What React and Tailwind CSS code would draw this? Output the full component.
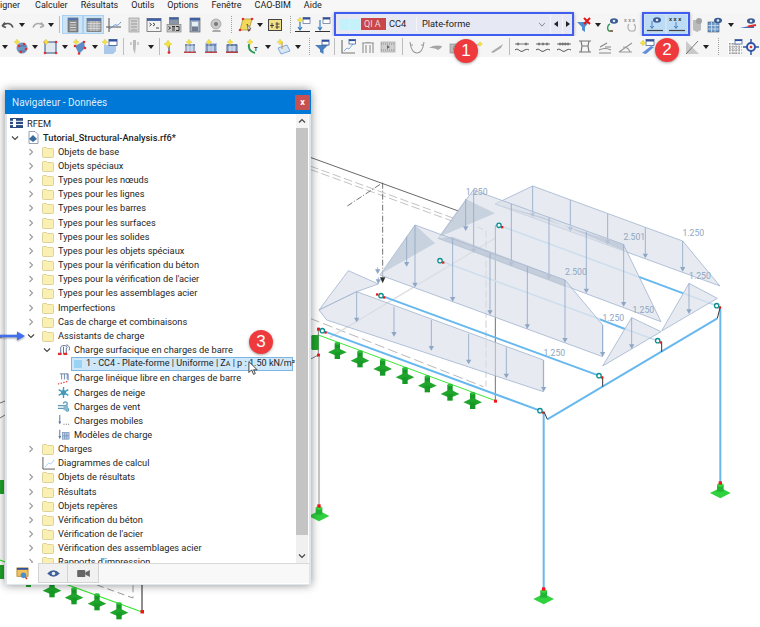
import React from "react";

const Star = ({ x = 3, y = 3, s = 3 }) => {
  const X = Number(x), Y = Number(y), S = Number(s);
  return (
    <polygon fill="#f5e23a" stroke="#c9b21e" strokeWidth=".3" points={`${X},${Y - S} ${X + S * 0.35},${Y - S * 0.35} ${X + S},${Y} ${X + S * 0.35},${Y + S * 0.35} ${X},${Y + S} ${X - S * 0.35},${Y + S * 0.35} ${X - S},${Y} ${X - S * 0.35},${Y - S * 0.35}`} />
  );
};
const Eye = ({ x = 10, y = 4 }) => (
  <g>
    <ellipse cx={x} cy={y} rx="4" ry="2.8" fill="#3a5a94" />
    <circle cx={x} cy={y} r="1.3" fill="#dfe8f5" />
  </g>
);
const Tag = ({ x = 8, y = 1 }) => (
  <g>
    <rect x={x} y={y} width="7" height="6" fill="#fff" stroke="#6b7c99" strokeWidth=".8" />
    <rect x={x} y={y} width="7" height="2" fill="#2f4f9e" />
  </g>
);
const Dots = ({ pts }) => pts.map((p, i) => <circle key={i} cx={p[0]} cy={p[1]} r="1.3" fill="#e03030" />);
const Bars = () => (
  <g>
    <rect x="2" y="12.5" width="12" height="1.4" fill="#b83030" />
    <path d="M4 5v8M8 5v8M12 5v8M3 6h10" stroke="#4f6d9e" strokeWidth="1" fill="none" />
    <rect x="5" y="7" width="6" height="5" fill="#bcd0e8" opacity=".8" />
  </g>
);
const Wavy = ({ d = 2 }) => (
  <g fill="none" stroke="#777" strokeWidth="1">
    <path d="M1 5h14" />
    {Array.from({ length: d }).map((_, i) => <circle key={i} cx={4 + i * (8 / Math.max(d - 1, 1))} cy="5" r="1" fill="#777" />)}
    <path d="M1 11c3-3 5 3 8 1s4-2 6-1" stroke="#555" />
  </g>
);

const icons = {
  undo: <path d="M2 9l3-3.5M2 9l4 1.5M3 8.5c3-3 8-3 10 2" fill="none" stroke="#555" strokeWidth="1.6" />,
  redo: <path d="M14 9l-3-3.5M14 9l-4 1.5M13 8.5c-3-3-8-3-10 2" fill="none" stroke="#aaa" strokeWidth="1.6" />,
  navA: <g><rect x="3" y="1" width="10" height="14" fill="#8b8b8b" stroke="#5a5a5a" strokeWidth=".6" /><rect x="3" y="1" width="10" height="2.4" fill="#5474ac" /><path d="M5 5.5h6M5 8h6M5 10.5h6M5 13h6" stroke="#d6d6d6" strokeWidth="1" /></g>,
  navB: <g><rect x="1" y="1.5" width="14" height="13" fill="#a5a5a5" stroke="#5a5a5a" strokeWidth=".6" /><rect x="1" y="1.5" width="14" height="2.4" fill="#5474ac" /><path d="M1.5 6.5h13M1.5 9h13M1.5 11.5h13M5 4v10M8 4v10M11 4v10" stroke="#dcdcdc" strokeWidth=".8" /></g>,
  chart: <g fill="none"><path d="M3 1v14M0 10h15" stroke="#555" strokeWidth="1" /><path d="M3 12c3-1 5-5 7-4s3-1 5-3" stroke="#5a8fd0" strokeWidth="1" /></g>,
  doc: <g><rect x="3" y="1" width="10" height="14" fill="#d4d4d4" stroke="#999" strokeWidth=".7" /><path d="M5 4h6M5 7h6M5 10h6M5 13h6" stroke="#999" strokeWidth="1" /></g>,
  win: <g><rect x="1" y="1.5" width="14" height="13" fill="#f3f3f3" stroke="#666" strokeWidth=".8" /><rect x="1" y="1.5" width="14" height="2.4" fill="#3f5fa6" /><path d="M3.5 6l2 1.5-2 1.5M7 6l2 1.5-2 1.5M10 11h3" fill="none" stroke="#333" strokeWidth=".9" /></g>,
  sc: <g><rect x="3.5" y="0.5" width="9" height="7" fill="#8896a8" stroke="#666" strokeWidth=".6" /><rect x="3.5" y="0.5" width="9" height="2" fill="#3f5fa6" /><rect x="1" y="7.5" width="14" height="7.5" fill="#c8c8c8" stroke="#777" strokeWidth=".6" /><path d="M2.5 9.5l2 1.5-2 1.5M6 9.5h3M6 11h3M6 13h3M10 9.5h3v4h-3" fill="none" stroke="#222" strokeWidth=".9" /></g>,
  docb: <g><rect x="3" y="1" width="10" height="14" fill="#9fb0c6" stroke="#666" strokeWidth=".7" /><rect x="3" y="1" width="10" height="2.4" fill="#3f5fa6" /><rect x="5" y="5" width="6" height="4" fill="#e9eef5" /><path d="M5 11h6M5 13h6" stroke="#445" strokeWidth="1" /></g>,
  eye3d: <g><circle cx="8" cy="7" r="5" fill="#c9c9c9" stroke="#999" strokeWidth=".7" /><circle cx="8" cy="7" r="2" fill="#777" /><path d="M5 13h7l1 2H4z" fill="#aaa" /></g>,
  para: <g><polygon points="5,2 14,2 11,13 2,13" fill="#f1d95c" stroke="#a78d24" strokeWidth=".7" /><Dots pts={[[5, 2], [14, 2], [11, 13], [2, 13]]} /><path d="M9 7l4 5-2 .3-.5 2z" fill="#eee" stroke="#333" strokeWidth=".6" /></g>,
  box: <g><rect x="1.5" y="2.5" width="13" height="11" fill="#f3e187" stroke="#444" strokeWidth="1" /><path d="M5 6v5M3 8.5h4M10 5v7M8.5 7h4M8.5 10h4" stroke="#333" strokeWidth=".9" /></g>,
  up: <g><Tag x={8} y={0.5} /><Star x={5} y={3} /><path d="M5 5v7M3 10l2 3 2-3" stroke="#3a7fbf" strokeWidth="1.2" fill="none" /><path d="M0 14.5h15" stroke="#333" strokeWidth="1" /></g>,
  dn: <g><Tag x={8} y={0.5} /><path d="M5 3v9M3 10l2 3 2-3" stroke="#3a7fbf" strokeWidth="1.2" fill="none" /><path d="M0 14.5h15" stroke="#333" strokeWidth="1" /></g>,
  fx: <g><polygon points="1,5 13,5 9,10 9,15 6,13 6,10" fill="#4f8fd0" /><path d="M8 1l6 6M14 1L8 7" stroke="#e01818" strokeWidth="2" /></g>,
  eyeC: <g><Eye x={10} y={4} /><path d="M6 7c-3 1-3 6-1 7h4" fill="none" stroke="#2a9a55" strokeWidth="1.4" /><path d="M6 14h3" stroke="#c03030" strokeWidth="1" /></g>,
  xxxg: <g><text x="0" y="5" fontSize="5" fontWeight="700" fill="#8a8a8a" fontFamily="Liberation Sans">x x x</text><path d="M5 7c-2 2-1 6 1 7h4c2-2 2-5 0-7" fill="none" stroke="#aaa" strokeWidth="1.1" /></g>,
  eyeL: <g><Eye x={10} y={4} /><path d="M5 5v7M3.2 10l1.8 2.5L6.8 10" fill="none" stroke="#4a80c0" strokeWidth="1" /><path d="M0 14.5h16" stroke="#444" strokeWidth="1.2" /></g>,
  xxxL: <g><text x="0" y="5" fontSize="5.5" fontWeight="700" fill="#222" fontFamily="Liberation Sans">x x x</text><path d="M7 6v6M5.2 10L7 12.5 8.8 10" fill="none" stroke="#4a80c0" strokeWidth="1" /><path d="M0 14.5h16" stroke="#444" strokeWidth="1.2" /></g>,
  can: <g><path d="M4 3h8v10l-4 2-4-2z" fill="#bbb" /><circle cx="10" cy="4" r="3" fill="#a3a3a3" /></g>,
  gridE: <g><rect x="1" y="5" width="11" height="10" fill="#6d9ac8" stroke="#345" strokeWidth=".5" /><path d="M1 8.5h11M1 12h11M4.5 5v10M8 5v10" stroke="#dbe7f3" strokeWidth=".7" /><Eye x={11} y={3.5} /></g>,
  lineE: <g><Eye x={11} y={4} /><path d="M0 11l14-3v3z" fill="#3a6fc0" /><path d="M8 9.5l8-1.5" stroke="#e03030" strokeWidth="1.8" /></g>,
  globe: <g><circle cx="9" cy="9" r="5.5" fill="#6f96c5" /><path d="M5 7l8 0M6 12l6 0" stroke="#44618f" strokeWidth=".7" /><Dots pts={[[6, 7], [11, 5], [13, 10], [8, 13]]} /><Star x={4} y={3} /></g>,
  sq: <g><rect x="3" y="3" width="11" height="11" fill="#e2e8f0" stroke="#4c6c9c" strokeWidth="1.2" /><Dots pts={[[3, 3], [14, 3], [3, 14], [14, 14]]} /><Star x={4} y={3} /></g>,
  solid: <g><polygon points="3,7 12,2 13,9 7,15" fill="#5f8cc4" /><Dots pts={[[3, 7], [12, 3], [13, 9], [7, 14.5]]} /><Star x={4} y={3} /></g>,
  cube: <g><polygon points="2,6 11,6 14,3 14,12 11,15 2,15" fill="#a9c8ea" /><rect x="7" y="0.5" width="8" height="6" fill="#fff" stroke="#33558f" strokeWidth=".8" /><rect x="7" y="0.5" width="8" height="2" fill="#2f4f9e" /><Star x={3} y={3} /></g>,
  grayS: <g><path d="M7 1h3v5l-1 9-2-5z" fill="#bbb" /><path d="M4 3h2v3H4zM11 3h2v3h-2z" fill="#ccc" /></g>,
  star1: <g><path d="M7 6v6" stroke="#5a6f96" strokeWidth="1.5" /><circle cx="7" cy="13.5" r="1.4" fill="#e03030" /><Star x={6} y={5} s={4} /></g>,
  m1: <g><Bars /><Star x={7} y={3} /></g>,
  m2: <g><rect x="2" y="4" width="12" height="9" fill="#a8bfde" opacity=".8" /><Bars /><Star x={6} y={3} /></g>,
  m3: <g><rect x="3" y="6" width="10" height="7" fill="none" stroke="#4f6d9e" /><Bars /><Star x={6} y={3} /></g>,
  mgreen: <g><path d="M4 5c-1 5 2 8 6 9" fill="none" stroke="#2a9a55" strokeWidth="2" /><text x="9" y="12" fontSize="6" fontWeight="700" fill="#333" fontFamily="Liberation Sans">T</text><Star x={5} y={3} /></g>,
  plane: <g><polygon points="3,9 12,6 15,12 6,15" fill="#d8e6f6" stroke="#6a98d0" strokeWidth=".8" /><path d="M7 3v7" stroke="#c09030" /><Star x={5} y={3} /></g>,
  filter: <g><polygon points="1,6 14,6 9.5,10.5 9.5,15 6,13 6,10.5" fill="#4a80c0" /><rect x="8" y="1" width="7" height="5" fill="#fff" stroke="#33558f" strokeWidth=".8" /><rect x="8" y="1" width="7" height="1.8" fill="#2f4f9e" /></g>,
  axes: <g><path d="M2 1v13h13" fill="none" stroke="#777" strokeWidth="1.2" /><path d="M4 12l3-3 2 1 4-5" fill="none" stroke="#88aedc" /><rect x="9" y="0.5" width="6.5" height="4.5" fill="#fff" stroke="#33558f" strokeWidth=".7" /><rect x="9" y="0.5" width="6.5" height="1.6" fill="#2f4f9e" /></g>,
  arch: <path d="M3 14V5c0-2 10-2 10 0v9M6 14V6M10 14V6M2 4h12" fill="none" stroke="#999" strokeWidth="1.2" />,
  film: <g><rect x="1" y="3" width="14" height="10" fill="#cfcfcf" stroke="#999" strokeWidth=".6" /><path d="M1 5h14M1 11h14" stroke="#888" strokeDasharray="1 1" /><path d="M7 6l3 2-3 2z" fill="#666" /></g>,
  curve: <path d="M1 3c1 8 3 11 7 11s6-3 7-11M1 6h3M12 6h3" fill="none" stroke="#999" strokeWidth="1.1" />,
  wing: <path d="M1 9c4-3 9-3 13-2-1 3-3 3-4 4-3-2-6-2-9-2z" fill="#a5a5a5" />,
  cam: <g><rect x="1" y="5" width="13" height="9" fill="#bdbdbd" stroke="#888" strokeWidth=".6" /><circle cx="7" cy="9.5" r="2.5" fill="#eee" stroke="#888" /></g>,
  ystar: <g><path d="M3 6h7M3 13l5-7" stroke="#aaa" strokeWidth="1.2" /><Star x={11} y={5} s={2.5} /></g>,
  slash: <path d="M2 13L14 5l-2 4-8 5z" fill="#aaa" />,
  w2: <Wavy d={2} />,
  w3: <Wavy d={3} />,
  w4: <Wavy d={4} />,
  beam: <g fill="none" stroke="#777" strokeWidth="1.2"><path d="M2 2h12M2 13h12M4 2l1 5h6l1-5M4 13l1-6M12 13l-1-6" /></g>,
  beam2: <g fill="none" stroke="#888" strokeWidth="1.2"><path d="M2 11c4-2 8-2 12 0M2 14h12M3 8l7-4M8 8h6" /></g>,
  sl: <g fill="none" stroke="#999" strokeWidth="1.2"><path d="M1 13L14 4M1 13h13" /><path d="M5 8c3 0 6 2 7 5" /></g>,
  yb: <g><polygon points="3,14 12,7 15,8 7,15" fill="#5f8fdc" /><rect x="7" y="0.5" width="8" height="6" fill="#fff" stroke="#33558f" strokeWidth=".7" /><rect x="7" y="0.5" width="8" height="2" fill="#2f4f9e" /><Star x={4} y={4} /></g>,
  wedge: <g><polygon points="2,2 2,15 15,15" fill="#c9c9c9" /><path d="M2 15L14 2" stroke="#777" strokeWidth="1" /></g>,
  gridT: <g><rect x="1" y="2" width="14" height="13" fill="#fff" /><path d="M2 5h11M2 8h13M2 11h13M2 14h13M3 4v11M6 4v11M9 4v11M12 4v11" stroke="#888" strokeWidth="1.2" strokeDasharray="1.4 1" /><rect x="8" y="0.5" width="7" height="4.5" fill="#fff" stroke="#33558f" strokeWidth=".7" /><rect x="8" y="0.5" width="7" height="1.6" fill="#2f4f9e" /></g>,
  cog: <g><circle cx="8" cy="8" r="4" fill="none" stroke="#2f55a8" strokeWidth="2" /><path d="M8 0v5M8 11v5M0 8h5M11 8h5" stroke="#2f55a8" strokeWidth="1.5" /><Dots pts={[[8, 8]]} /></g>,
};

const Icon = ({ k }) => <svg viewBox="0 0 16 16" className="w-4 h-4 shrink-0 overflow-visible">{icons[k]}</svg>;
const Caret = () => <span className="w-0 h-0 border-x-[3.5px] border-x-transparent border-t-[4px] border-t-[#222]" />;
const Cell = ({ w, k, sel }) => (
  <div className={`${w} flex items-center justify-center shrink-0 ${sel ? "h-[19px] bg-[#cde4f7] border border-[#a9d2f2]" : ""}`}>
    {k === "drop" ? <Caret /> : k === "sep" ? <span className="w-px h-[17px] bg-[#bdbdbd]" /> : k === "dots" ? <span className="h-[17px] border-l border-dotted border-[#a0a0a0]" /> : k ? <Icon k={k} /> : null}
  </div>
);

const row1a = [["w-[15px]", "undo"], ["w-[14px]", "drop"], ["w-[17px]", "redo"], ["w-[10px]", "drop"], ["w-[6px]", "sep"], ["w-[21px]", "navA", 1], ["w-[21px]", "navB", 1], ["w-[19px]", "chart"], ["w-[21px]", "doc"], ["w-[20px]", "win"], ["w-[20px]", "sc"], ["w-[21px]", "docb"], ["w-[21px]", "eye3d"], ["w-[10px]", "dots"], ["w-[20px]", "para"], ["w-[7px]", "drop"], ["w-[24px]", "box"], ["w-[6px]", "dots"], ["w-[19px]", "up"], ["w-[22px]", "dn"]];
const row1b = [["w-[20px]", "fx"], ["w-[8px]", "drop"], ["w-[20px]", "eyeC"], ["w-[20px]", "xxxg"]];
const row1c = [["w-[13px]", "can"], ["w-[24px]", "gridE"], ["w-[8px]", "drop"], ["w-[25px]", "lineE"]];
const row2 = [["w-[10px]", "drop"], ["w-[22px]", "globe"], ["w-[6px]", "drop"], ["w-[24px]", "sq"], ["w-[6px]", "drop"], ["w-[24px]", "solid"], ["w-[6px]", "drop"], ["w-[24px]", "cube"], ["w-[2px]", "sep"], ["w-[20px]", "grayS"], ["w-[14px]", "drop"], ["w-[2px]", "sep"], ["w-[20px]", "star1"], ["w-[20px]", "m1"], ["w-[22px]", "m2"], ["w-[20px]", "m3"], ["w-[22px]", "mgreen"], ["w-[8px]", "drop"], ["w-[22px]", "plane"], ["w-[8px]", "drop"], ["w-[14px]", "dots"], ["w-[12px]", "filter"], ["w-[12px]", "sep"], ["w-[16px]", "axes"], ["w-[24px]", "arch"], ["w-[16px]", "film"], ["w-[12px]", "sep"], ["w-[17px]", "curve"], ["w-[22px]", "wing"], ["w-[19px]", "cam"], ["w-[21px]", "ystar"], ["w-[20px]", "slash"], ["w-[4px]", "sep"], ["w-[22px]", "w2"], ["w-[20px]", "w3"], ["w-[21px]", "w4"], ["w-[21px]", "beam"], ["w-[20px]", "beam2"], ["w-[22px]", "sl"], ["w-[20px]", "yb"], ["w-[27px]", null], ["w-[16px]", "wedge"], ["w-[12px]", "drop"], ["w-[12px]", "dots"], ["w-[22px]", "gridT"], ["w-[10px]", "cog"]];

const Badge = ({ n, cls }) => (
  <div className={`absolute w-6 h-6 rounded-full bg-[#ee3a3c] text-white text-[17px] leading-6 text-center font-['Liberation_Sans'] shadow-[0_1px_3px_rgba(0,0,0,0.35)] ${cls}`}>{n}</div>
);

/* ---------- navigator ---------- */
const Chev = ({ open }) => (
  <svg viewBox="0 0 8 8" className="w-2 h-2 shrink-0">
    <path d={open ? "M1 2.5l3 3 3-3" : "M2.5 1l3 3-3 3"} fill="none" stroke={open ? "#444" : "#9a9a9a"} strokeWidth="1.1" />
  </svg>
);
const Folder = () => (
  <svg viewBox="0 0 12 12" className="w-3 h-3 shrink-0">
    <path d="M.5 2.5q0-1 1-1h3l1 1h5q1 0 1 1v7q0 1-1 1h-9q-1 0-1-1z" fill="#fbf0b4" stroke="#d6c88c" strokeWidth=".8" />
  </svg>
);
const Small = ({ k }) => {
  const g = {
    surf: <g><path d="M4 12V5c0-3 7-3 7 0M7 12V4M10 12V5" fill="none" stroke="#4f6d9e" strokeWidth="1" /><path d="M10 2a4 4 0 0 1 3 6" fill="none" stroke="#667" strokeWidth="1" /><rect x="1" y="10.5" width="4" height="2.5" fill="#e03030" /><rect x="7" y="10.5" width="4" height="2.5" fill="#e03030" /></g>,
    lin: <g><path d="M3 2h9v7M5 2v6M8 2v6M11 2v6" fill="none" stroke="#6a84ad" strokeWidth="1" /><path d="M1 13l11-3" stroke="#e03030" strokeWidth="1.2" strokeDasharray="1.5 1.5" /></g>,
    snow: <g stroke="#3f9bb8" strokeWidth="1.5" fill="none"><path d="M7 1v12M1.8 4l10.4 6M1.8 10l10.4-6" /><circle cx="7" cy="7" r="2" /></g>,
    wind: <g fill="none" stroke="#5a9ab8" strokeWidth="1.4"><path d="M1 6h8a2 2 0 1 0-2-2M1 9h10a1.5 1.5 0 1 1-1.5 1.5" /><rect x="7" y="6" width="5" height="5" fill="#8ab8d0" stroke="none" /></g>,
    mob: <g><path d="M3 1v9" stroke="#5a78a8" strokeWidth="1.1" /><path d="M1.5 8l1.5 3 1.5-3z" fill="#5a78a8" /><path d="M7 11h1M9.5 11h1M12 11h1" stroke="#666" strokeWidth="1.1" /></g>,
    mod: <g><path d="M3 2v9" stroke="#5a78a8" strokeWidth="1.1" /><path d="M1.5 8.5l1.5 3 1.5-3z" fill="#5a78a8" /><rect x="6" y="5" width="7" height="7" fill="#bcd0e8" stroke="#5a78a8" strokeWidth=".6" /><path d="M8.3 5v7M10.6 5v7M6 8.5h7" stroke="#5a78a8" strokeWidth=".6" /></g>,
    diag: <g fill="none"><path d="M1 0v13h13" stroke="#555" strokeWidth="1" /><path d="M3 11c2-1 3-5 5-4s3-1 5-4" stroke="#9cc4ea" strokeWidth="1" /></g>,
  }[k];
  return <svg viewBox="0 0 14 14" className="w-[13px] h-[13px] shrink-0">{g}</svg>;
};

const L2 = ({ t, noChev, icon, open }) => (
  <div className="h-[14.17px] flex items-center pl-[20px] shrink-0">
    <span className="w-2 shrink-0">{!noChev && <Chev open={open} />}</span>
    <span className="ml-[7px] w-3 shrink-0">{icon ? <Small k={icon} /> : <Folder />}</span>
    <span className="ml-[4px] whitespace-nowrap">{t}</span>
  </div>
);
const L3 = ({ t, icon, open }) => (
  <div className="h-[14.17px] flex items-center pl-[36px] shrink-0">
    <span className="w-2 shrink-0">{open && <Chev open />}</span>
    <span className="ml-[6px] shrink-0"><Small k={icon} /></span>
    <span className="ml-[4px] whitespace-nowrap">{t}</span>
  </div>
);

const top = ["Objets de base", "Objets spéciaux", "Types pour les nœuds", "Types pour les lignes", "Types pour les barres", "Types pour les surfaces", "Types pour les solides", "Types pour les objets spéciaux", "Types pour la vérification du béton", "Types pour la vérification de l'acier", "Types pour les assemblages acier", "Imperfections", "Cas de charge et combinaisons"];
const rest = ["Objets de résultats", "Résultats", "Objets repères", "Vérification du béton", "Vérification de l'acier", "Vérification des assemblages acier", "Rapports d'impression"];

const Navigator = () => (
  <div className="absolute left-[5px] top-[33px] w-[306px] h-[495px] flex flex-col bg-white shadow-[0_0_9px_rgba(0,0,0,0.45)] border-x-2 border-[#dfe6ec] border-b font-['Roboto',sans-serif] text-[9.25px] text-[#1e1e1e]">
    <div className="-mx-[2px] h-[24px] shrink-0 bg-[#0078d7] flex items-center justify-between pl-[7px] pr-[1px]">
      <span className="text-[10px] text-[#dcecf9]">Navigateur - Données</span>
      <span className="w-[15px] h-[15px] bg-[#c75050] text-white text-[9px] font-bold leading-[14px] text-center mt-[1px]">x</span>
    </div>
    <div className="flex-1 flex min-h-0">
      <div className="flex-1 flex flex-col overflow-hidden pt-[2.4px]">
        <div className="h-[14.17px] flex items-center pl-[3px] shrink-0">
          <svg viewBox="0 0 13 10" className="w-[13px] h-[10px] shrink-0"><rect width="13" height="10" fill="#2a4a80" /><path d="M0 3.3h13M0 6.6h13" stroke="#fff" strokeWidth="1" /><rect x="3" y="1" width="3" height="8" fill="#fff" /></svg>
          <span className="ml-[4px]">RFEM</span>
        </div>
        <div className="h-[14.17px] flex items-center pl-[4px] shrink-0">
          <Chev open />
          <svg viewBox="0 0 11 13" className="ml-[9px] w-[11px] h-[13px] shrink-0"><path d="M1 .5h6l3 3v9H1z" fill="#fff" stroke="#7b8aa0" strokeWidth=".8" /><path d="M1 8l4-4 4 4-4 3z" fill="#3a6a9e" /></svg>
          <span className="ml-[4px] font-medium whitespace-nowrap">Tutorial_Structural-Analysis.rf6*</span>
        </div>
        {top.map((t) => <L2 key={t} t={t} />)}
        <L2 t="Assistants de charge" open />
        <L3 t="Charge surfacique en charges de barre" icon="surf" open />
        <div className="h-[14.17px] flex items-center shrink-0 pl-[64px]">
          <div className="w-[222px] h-[14px] flex items-center bg-[#cfe8f9] border border-[#7db5e2] pl-[2px]">
            <span className="w-2 h-2 bg-[#9bd3f2] shrink-0" />
            <span className="ml-[4px] whitespace-nowrap text-[9.1px]">1 - CC4 - Plate-forme | Uniforme | Z<span className="text-[7px]">A</span> | p : 1.50 kN/m²</span>
          </div>
        </div>
        <L3 t="Charge linéique libre en charges de barre" icon="lin" />
        <L3 t="Charges de neige" icon="snow" />
        <L3 t="Charges de vent" icon="wind" />
        <L3 t="Charges mobiles" icon="mob" />
        <L3 t="Modèles de charge" icon="mod" />
        <L2 t="Charges" />
        <L2 t="Diagrammes de calcul" noChev icon="diag" />
        {rest.map((t) => <L2 key={t} t={t} />)}
      </div>
      <div className="w-[12px] mr-[1px] shrink-0 flex flex-col bg-[#f0f0f0]">
        <div className="h-[14px] flex items-center justify-center bg-[#f4f4f4]"><svg viewBox="0 0 8 8" className="w-2 h-2"><path d="M1 5.5l3-3 3 3" fill="none" stroke="#444" strokeWidth="1.2" /></svg></div>
        <div className="h-[407px] bg-[#c4c4c4]" />
        <div className="flex-1" />
        <div className="h-[14px] flex items-center justify-center"><svg viewBox="0 0 8 8" className="w-2 h-2"><path d="M1 2.5l3 3 3-3" fill="none" stroke="#444" strokeWidth="1.2" /></svg></div>
      </div>
    </div>
    <div className="h-[21px] shrink-0 flex">
      <div className="w-[31px] flex items-center justify-center">
        <svg viewBox="0 0 14 14" className="w-[13px] h-[13px]"><rect x="1" y="1" width="12" height="9" fill="#f2c15a" stroke="#b07a20" strokeWidth=".8" /><rect x="1" y="1" width="12" height="2" fill="#2f4f9e" /><circle cx="8" cy="9" r="3" fill="#4a90d0" /><path d="M10 11l2 2" stroke="#c03030" strokeWidth="1.5" /></svg>
      </div>
      <div className="h-[20px] w-[30px] flex items-center justify-center bg-[#f1f1f1] border border-[#d4d4d4]">
        <svg viewBox="0 0 14 10" className="w-[13px] h-[9px]"><path d="M0 5q7-7 14 0q-7 7-14 0z" fill="#3d5f9a" /><circle cx="7" cy="5" r="2" fill="#e6edf6" /></svg>
      </div>
      <div className="h-[20px] w-[31px] flex items-center justify-center bg-[#f1f1f1] border border-l-0 border-[#d4d4d4]">
        <svg viewBox="0 0 14 10" className="w-[13px] h-[9px]"><rect y="1" width="9" height="8" rx="1" fill="#666" /><path d="M9 4l5-3v8L9 6z" fill="#666" /></svg>
      </div>
      <div className="flex-1 h-[20px] bg-[#f8f8f8] border-t border-[#d8d8d8]" />
    </div>
  </div>
);

/* ---------- scene ---------- */
const Arr = ({ x, a, b }) => (
  <g>
    <line x1={x} y1={a} x2={x} y2={b - 10} stroke="#8fa7c6" strokeWidth="2.5" />
    <polygon points={`${x - 8},${b - 14} ${x + 8},${b - 14} ${x},${b}`} fill="#8fa7c6" />
  </g>
);
const Load = ({ p, dark }) => <polygon points={p} fill={dark ? "#aebccd" : "#d9dfe9"} fillOpacity={dark ? 0.55 : 0.62} stroke={dark ? "none" : "#a3b6d0"} strokeWidth="2.5" />;
const Lab = ({ x, y, t }) => <text x={x} y={y} fontSize="26" fill="#8ea5c2" fontFamily="'Roboto',sans-serif" textAnchor="middle">{t}</text>;
const Node = ({ x, y }) => (
  <g>
    <rect x={x + 6} y={y + 2} width="7" height="7" fill="#f01818" />
    <circle cx={x} cy={y} r="6.5" fill="#fff" stroke="#0d8f92" strokeWidth="4" />
  </g>
);
const SupF = ({ x, y }) => (
  <g fill="#1fa52c">
    <rect x={x - 8} y={y - 25} width="16" height="24" fill="#169a25" />
    <ellipse cx={x} cy={y - 25} rx="8" ry="4" fill="#2cc03a" />
    <polygon points={`${x - 28},${y + 2} ${x},${y - 12} ${x + 28},${y + 2} ${x},${y + 14}`} />
    <rect x={x - 8} y={y + 2} width="16" height="20" fill="#169a25" />
  </g>
);
const Foot = ({ x, y }) => (
  <g>
    <polygon points={`${x - 31},${y} ${x},${y - 16} ${x + 31},${y} ${x},${y + 16}`} fill="#2fd13f" />
    <rect x={x - 10} y={y - 24} width="20" height="20" fill="#22b433" />
    <ellipse cx={x} cy={y - 24} rx="10" ry="5" fill="#34dc44" />
    <rect x={x - 5} y={y - 35} width="10" height="10" fill="#f01818" />
  </g>
);
const supsFront = [[82, 665], [150, 690], [218, 715], [285, 740], [352, 765], [420, 790], [488, 815], [-774, 1380], [-708, 1401], [-639, 1419], [-573, 1446]];
const beam = "#67b8ef";
const pale = "#bfdcf1";

const Scene = () => (
  <svg viewBox="0 57 760 570" className="absolute inset-0 w-full h-full">
    <g stroke="#777" strokeWidth="1">
      <path d="M0 338l5-3M0 403l5-2M0 418l5-3" />
    </g>
    <path d="M0 560L142 612" stroke="#35e62f" strokeWidth="1.2" />
    <path d="M142 585V612" stroke="#444" strokeWidth="1.2" />
    <rect x="140.5" y="610" width="3.5" height="3.5" fill="#f01818" />
    <path d="M97 585L133 598V585" stroke="#999" fill="none" strokeDasharray="7 4" />
    <g fill="#1fa52c">
      <path d="M0 480h4v14H0zM0 565h4v14H0z" />
      <rect x="26" y="585" width="5" height="2" />
    </g>

    <g transform="translate(310,130) scale(0.33333)">
      <path d="M-60 60L445 243" stroke="#4a4a4a" strokeWidth="2.5" fill="none" />
      <path d="M0 108L440 268M0 118L440 278" stroke="#b5b5b5" strokeWidth="2.5" strokeDasharray="26 10" fill="none" />
      <path d="M218 158V440M112 228L215 160" stroke="#555" strokeWidth="2.5" strokeDasharray="18 6 3 6" fill="none" />
      <path d="M500 290L528 302V770" stroke="#cfcfcf" strokeWidth="3" strokeDasharray="22 8" fill="none" />
      <path d="M0 565L520 770" stroke="#a8a8a8" strokeWidth="2.5" strokeDasharray="30 12" fill="none" />
      <path d="M60 622L555 325" stroke="#dedede" strokeWidth="4" fill="none" />
      <path d="M556 285V812" stroke="#555" strokeWidth="2.5" />
      <path d="M25 615L556 812" stroke="#3ce635" strokeWidth="3" />
      <path d="M25 595V675M0 688L25 675" stroke="#444" strokeWidth="2" fill="none" />
      {[[25, 597], [25, 675], [556, 813]].map((p, i) => <rect key={i} x={p[0] - 4} y={p[1] - 4} width="9" height="9" fill="#f01818" />)}
      <line x1="27" y1="680" x2="27" y2="1125" stroke="#bdbdbd" strokeWidth="5" />

      {supsFront.map((p, i) => <SupF key={i} x={p[0]} y={p[1]} />)}
      <g fill="#1fa52c"><rect x="4" y="615" width="22" height="45" rx="4" /></g>

      <path d="M37 602L690 842M213 497L867 737" stroke={beam} strokeWidth="6" fill="none" />
      <path d="M390 392L870 568M567 286L985 440" stroke={pale} strokeWidth="5" fill="none" />
      <path d="M870 568L945 597M985 440L1120 490" stroke={beam} strokeWidth="6" fill="none" />
      <path d="M945 597L1043 632M1120 490L1220 527" stroke={pale} strokeWidth="5" fill="none" />
      <path d="M712 868L1222 565M701 848V1375M1231 530V1060" stroke={beam} strokeWidth="6" fill="none" />
      <path d="M702 845L712 868M878 740V770M1055 635V665M1231 530L1222 565" stroke="#333" strokeWidth="3" fill="none" />

      <Load p="668,168 1118,333 1230,468 555,222" />
      {[[668, 168, 262], [781, 210, 305], [893, 252, 345], [1006, 293, 385], [1118, 333, 425]].map((a) => <Arr key={a[0]} x={a[0]} a={a[1]} b={a[2]} />)}
      <Load p="490,180 940,343 1053,575 385,325" />
      <Load dark p="467,207 555,250 385,322" />
      <Load dark p="555,222 940,343 942,362 700,262" />
      <Arr x={467} a={207} b={303} />
      {[[491, 180, 370], [604, 222, 410], [717, 262, 450], [829, 305, 490], [941, 343, 530]].map((a) => <Arr key={a[0]} x={a[0]} a={a[1]} b={a[2]} />)}
      <Load p="315,285 765,450 878,585 878,680 210,435" />
      <Load dark p="315,285 375,340 215,430" />
      <Load dark p="380,325 428,320 765,450 765,470" />
      <Arr x={290} a={320} b={410} />
      <Arr x={203} a={412} b={432} />
      <Arr x={205} a={442} b={462} />
      <polygon points="210,442 226,442 218,460" fill="#333" />
      {[[315, 285, 472], [428, 325, 515], [540, 370, 555], [652, 410, 597], [765, 450, 638], [878, 585, 680]].map((a) => <Arr key={a[0]} x={a[0]} a={a[1]} b={a[2]} />)}
      <Load p="115,422 205,462 140,485 27,540" />
      <Load p="140,485 700,690 700,785 50,570 27,540" />
      {[[140, 485, 577], [252, 530, 620], [364, 570, 662], [476, 612, 703], [589, 652, 745], [701, 690, 785]].map((a) => <Arr key={a[0]} x={a[0]} a={a[1]} b={a[2]} />)}
      <Load p="965,563 1053,605 878,708" />
      <Arr x={965} a={563} b={657} />
      <Load p="1137,460 1222,505 1055,603" />
      <Arr x={1137} a={460} b={552} />

      <Lab x={500} y={196} t="1.250" />
      <Lab x={973} y={330} t="2.501" />
      <Lab x={1150} y={319} t="1.250" />
      <Lab x={798} y={435} t="2.500" />
      <Lab x={1170} y={447} t="1.250" />
      <Lab x={1000} y={549} t="1.250" />
      <Lab x={910} y={572} t="1.250" />
      <Lab x={733} y={678} t="1.250" />

      {[[37, 602], [213, 497], [390, 392], [567, 286], [690, 842], [867, 737], [1043, 632], [1220, 527]].map((p, i) => <Node key={i} x={p[0]} y={p[1]} />)}
      <rect x="198" y="490" width="7" height="7" fill="#f01818" />

      <Foot x={701} y={1407} />
      <Foot x={1231} y={1089} />
      <Foot x={27} y={1158} />
    </g>
  </svg>
);

export default function App() {
  return (
    <div className="relative w-[760px] h-[627px] overflow-hidden bg-white flex flex-col font-['Roboto',sans-serif]">
      <div className="h-[13px] shrink-0 bg-[#f7f7f7] flex items-center gap-[13px] text-[9px] text-[#222] leading-none pb-[2px]">
        {["igner", "Calculer", "Résultats", "Outils", "Options", "Fenêtre", "CAO-BIM", "Aide"].map((m, i) => (
          <span key={m} className={i === 1 ? "ml-[2px]" : ""}>{m}</span>
        ))}
      </div>
      <div className="h-[23px] shrink-0 bg-[#f5f5f5] flex items-center">
        {row1a.map((c, i) => <Cell key={i} w={c[0]} k={c[1]} sel={c[2]} />)}
        <div className="w-[240px] h-[24px] -mt-px shrink-0 border-[2.5px] border-[#3f5df0] bg-[#e6e8f4] flex items-center text-[9.25px] text-[#222] shadow-[0_1px_3px_rgba(0,0,0,0.35)]">
          <span className="ml-[3px] w-[10px] h-[11px] bg-[#c4f1fa]" />
          <span className="ml-px w-[10px] h-[11px] bg-[#c4f1fa]" />
          <span className="ml-px w-[25px] h-[12px] bg-[#c8474a] text-[#f5dcdc] text-[9px] leading-[12px] pl-[3px]">QI A</span>
          <span className="ml-[3px] w-[27px]">CC4</span>
          <span className="w-px h-[14px] bg-[#f4f5fb]" />
          <span className="ml-[5px] w-[116px]">Plate-forme</span>
          <svg viewBox="0 0 8 6" className="w-[8px] h-[5px] shrink-0"><path d="M.5 1l3.5 4L7.5 1" fill="none" stroke="#777" strokeWidth="1" /></svg>
          <span className="ml-[4px] w-px h-[19px] bg-[#f4f5fb]" />
          <span className="ml-[3px] w-0 h-0 border-y-[3.5px] border-y-transparent border-r-[4px] border-r-[#222]" />
          <span className="ml-[4px] w-px h-[19px] bg-[#f4f5fb]" />
          <span className="ml-[3px] w-0 h-0 border-y-[3.5px] border-y-transparent border-l-[4px] border-l-[#222]" />
        </div>
        {row1b.map((c, i) => <Cell key={i} w={c[0]} k={c[1]} />)}
        <div className="w-[48px] h-[24px] -mt-px shrink-0 border-[2.5px] border-[#3f5df0] bg-[#cfe3f5] flex items-center justify-center gap-[2px] shadow-[0_1px_3px_rgba(0,0,0,0.35)]">
          <div className="w-[20px] h-[19px] bg-[#bcdcf5] flex items-center justify-center"><Icon k="eyeL" /></div>
          <div className="w-[20px] h-[19px] bg-[#bcdcf5] flex items-center justify-center"><Icon k="xxxL" /></div>
        </div>
        {row1c.map((c, i) => <Cell key={i} w={c[0]} k={c[1]} />)}
      </div>
      <div className="h-[21px] shrink-0 bg-[#f5f5f5] flex items-center">
        {row2.map((c, i) => <Cell key={i} w={c[0]} k={c[1]} />)}
      </div>
      <div className="relative flex-1 bg-white">
        <Scene />
        <Navigator />
        <svg viewBox="0 0 26 10" className="absolute left-0 top-[274px] w-[26px] h-[10px] drop-shadow-[0_1px_1px_rgba(0,0,0,0.4)]">
          <path d="M0 5h19" stroke="#3f6ff0" strokeWidth="2.5" />
          <path d="M17 .5l8 4.5-8 4.5z" fill="#3f6ff0" />
        </svg>
        <svg viewBox="0 0 12 16" className="absolute left-[248px] top-[303px] w-[11px] h-[16px]">
          <path d="M1 1v12l3-3 2 5 2-1-2-4h4z" fill="#fff" stroke="#333" strokeWidth="1" />
        </svg>
      </div>
      <Badge n="1" cls="left-[454px] top-[39px]" />
      <Badge n="2" cls="left-[655px] top-[38px]" />
      <Badge n="3" cls="left-[249px] top-[330px]" />
    </div>
  );
}
